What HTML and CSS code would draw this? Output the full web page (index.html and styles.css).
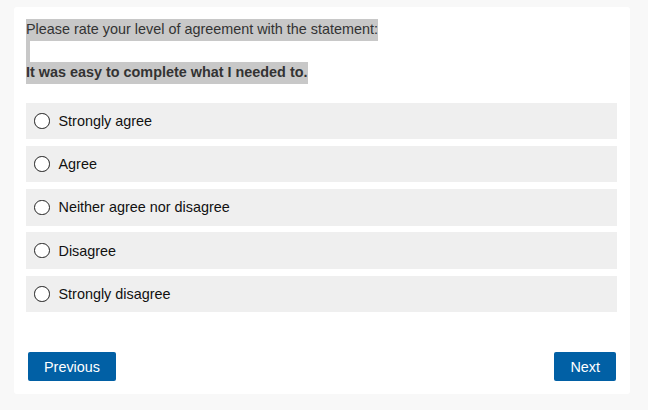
FILE: index.html
```html
<!DOCTYPE html>
<html lang="en">
<head>
	<meta charset="UTF-8">
	<title>Survey - Question</title>
	<link rel="stylesheet" href="styles.css">
</head>
<body>
	<div class="card">
		<div class="question">
			<div class="line">Please rate your level of agreement with the statement:</div>
			<div class="line blank">&nbsp;</div>
			<div class="line bold">It was easy to complete what I needed to.</div>
		</div>

		<div class="options">
			<label class="option"><span class="radio"></span>Strongly agree</label>
			<label class="option"><span class="radio"></span>Agree</label>
			<label class="option"><span class="radio"></span>Neither agree nor disagree</label>
			<label class="option"><span class="radio"></span>Disagree</label>
			<label class="option"><span class="radio"></span>Strongly disagree</label>
		</div>

		<div class="nav">
			<button class="btn">Previous</button>
			<button class="btn">Next</button>
		</div>
	</div>
</body>
</html>
```
FILE: styles.css
```css
html, body {
	margin: 0;
	padding: 0;
}
body {
	background-color: #f8f8f8;
	font-family: "Liberation Sans", Arial, sans-serif;
	font-size: 14.4px;
	padding: 7px 18px 16px 14px;
}
.card {
	background-color: #fff;
	border-radius: 3px;
	padding: 12px 13px 13px 12px;
}
.question {
	color: #333;
}
.question .line {
	width: fit-content;
	background-color: #c8c8c8;
	height: 21.5px;
	line-height: 21.5px;
}
.question .blank {
	width: 4px;
	overflow: hidden;
}
.question .bold {
	font-weight: bold;
}
.options {
	margin-top: 19px;
	display: flex;
	flex-direction: column;
	gap: 6.8px;
}
.option {
	display: flex;
	align-items: center;
	gap: 9px;
	height: 36.5px;
	padding-left: 8px;
	background-color: #efefef;
	color: #111;
}
.radio {
	width: 13.5px;
	height: 13.5px;
	border: 1.5px solid #222;
	border-radius: 50%;
	background-color: #fff;
}
.nav {
	display: flex;
	justify-content: space-between;
	margin-top: 40px;
	padding: 0 1px 0 2px;
}
.btn {
	font-family: "Liberation Sans", Arial, sans-serif;
	font-size: 14.4px;
	color: #fff;
	background-color: #0160a5;
	border: none;
	border-radius: 2px;
	height: 29px;
	padding: 0 16px;
}
```
